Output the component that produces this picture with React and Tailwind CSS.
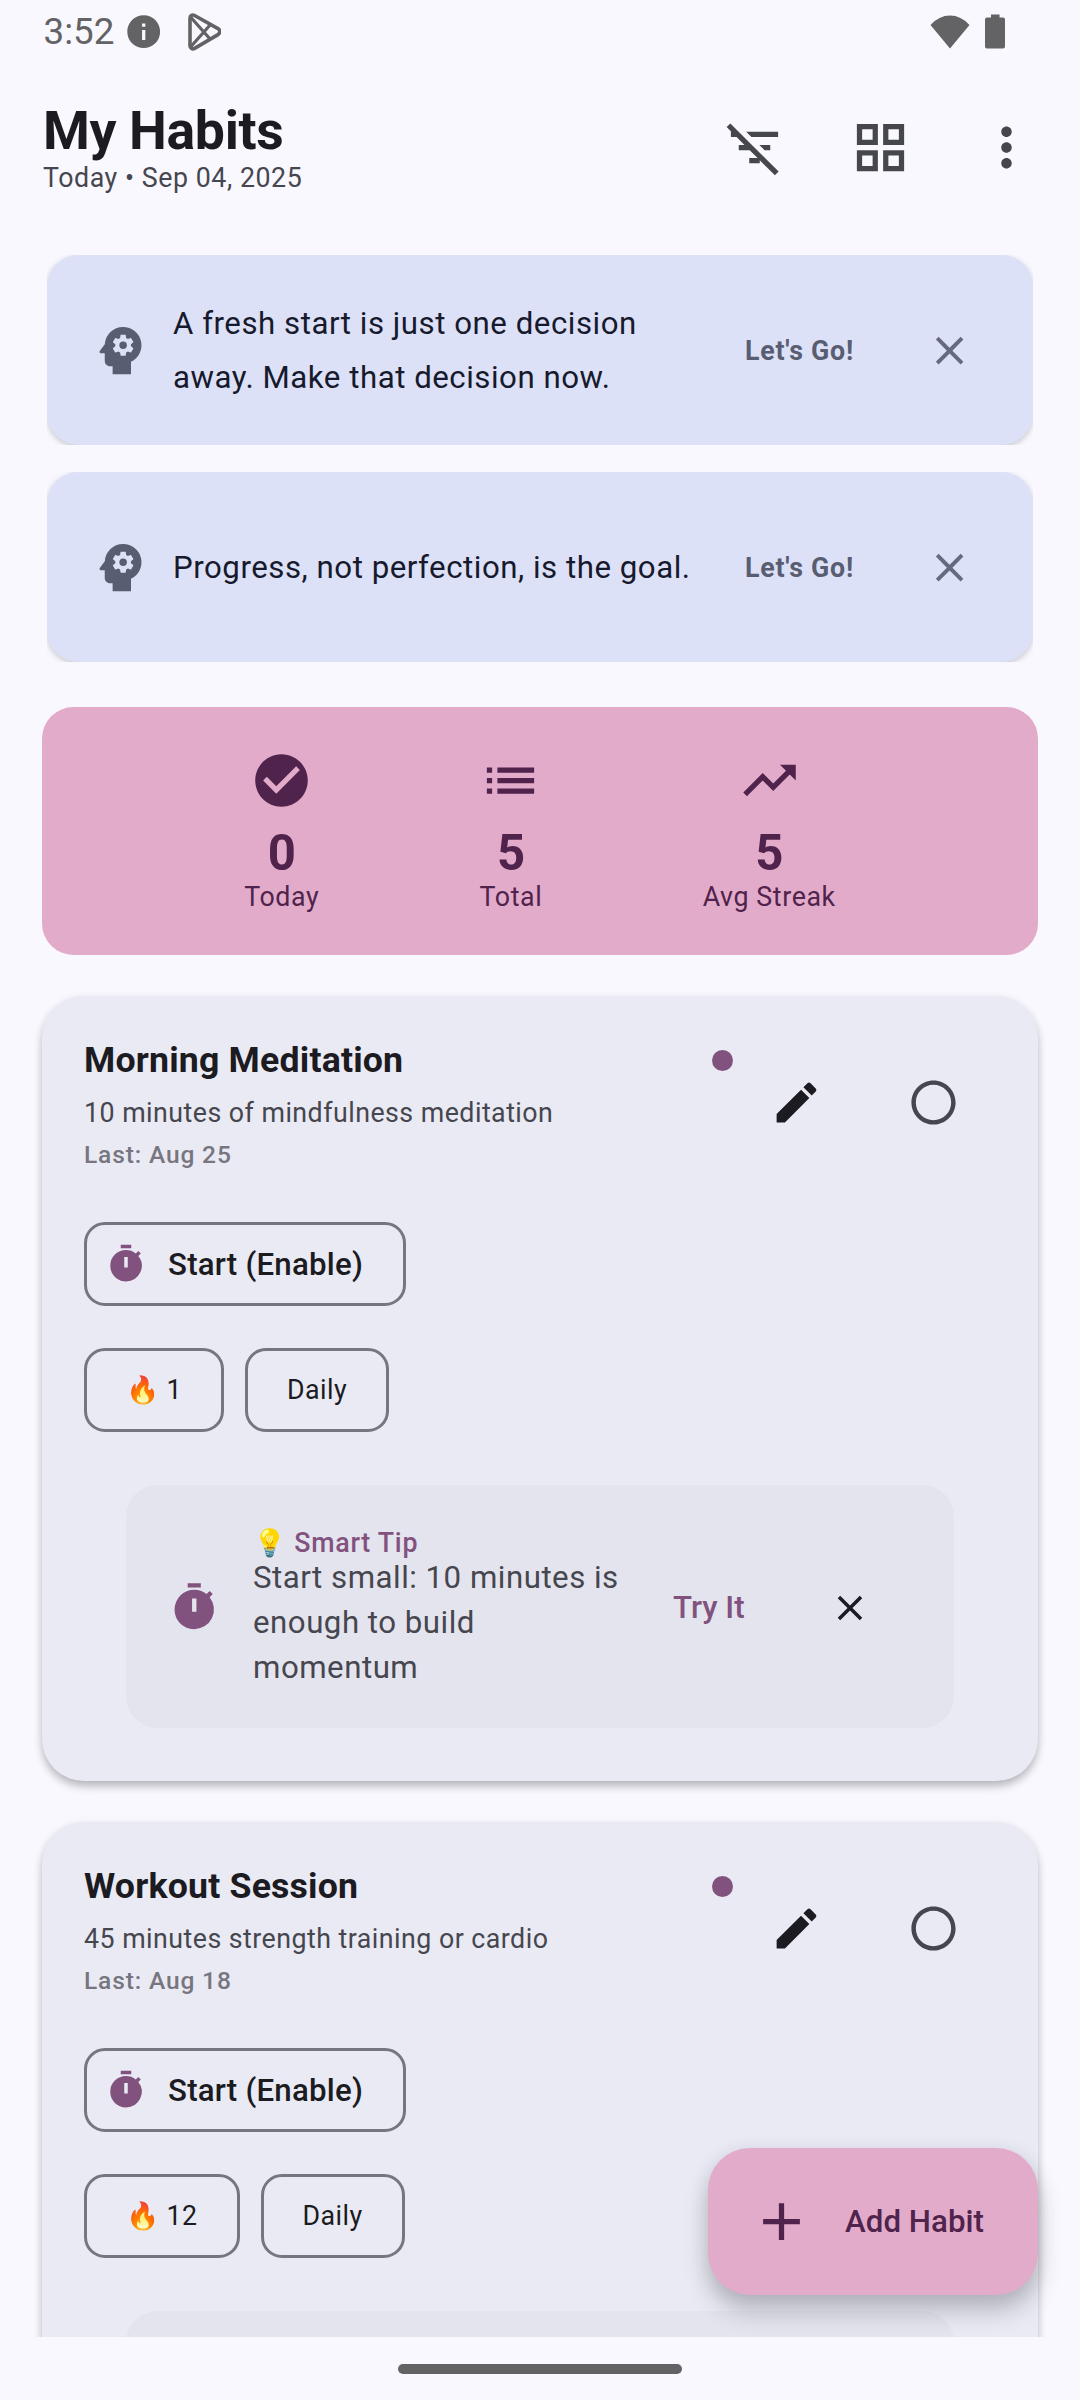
import React from "react";
import {
  MdInfo,
  MdFilterListOff,
  MdGridView,
  MdMoreVert,
  MdPsychology,
  MdClose,
  MdCheckCircle,
  MdList,
  MdTrendingUp,
  MdEdit,
  MdRadioButtonUnchecked,
  MdTimer,
  MdAdd,
} from "react-icons/md";

function PlayIcon() {
  return (
    <svg width="34" height="38" viewBox="0 0 34 38" fill="none" stroke="#636365" strokeWidth="3.6" strokeLinejoin="round">
      <path d="M3 5.2c0-2.6 2.4-4 4.600-2.700L31 15.600c2.400 1.400 2.400 4.600 0 6L7.600 35.400C5.400 36.700 3 35.300 3 32.700z" />
      <path d="M4 4.500L23.500 26.500M4 33.500L23.500 11.500" strokeWidth="3.2" />
    </svg>
  );
}

function StatusBar() {
  return (
    <div className="flex h-[63px] shrink-0 items-center pl-[43.500px] pr-[75px] text-[#636365]">
      <span className="text-[36.750px] leading-[63px]">3:52</span>
      <MdInfo className="ml-[10px] size-[39.400px]" />
      <span className="ml-[23px]">
        <PlayIcon />
      </span>
      <svg className="ml-auto" width="40" height="34" viewBox="0 0 40 34" fill="currentColor">
        <path d="M20 33.500L0.500 10Q9 0.500 20 0.500T39.500 10z" />
      </svg>
      <svg className="ml-[15px]" width="20" height="35" viewBox="0 0 20 35" fill="currentColor">
        <path d="M6 0.500h8.500V3.500H18a2 2 0 0 1 2 2V32.500a2 2 0 0 1-2 2H2a2 2 0 0 1-2-2V5.500a2 2 0 0 1 2-2h4z" />
      </svg>
    </div>
  );
}

function Header() {
  return (
    <header className="flex h-[168px] shrink-0 pl-[42px] pr-[42px]">
      <div className="flex flex-1 flex-col pl-px pt-[35px]">
        <h1 className="h-[62px] text-[53.550px] font-bold leading-[65px] tracking-[-0.350px] text-[#1b1b21]">My Habits</h1>
        <p className="text-[26.775px] leading-[36px] tracking-[0.550px] text-[#46464f]">Today • Sep 04, 2025</p>
      </div>
      <div className="flex items-center gap-[63px] text-[63px] text-[#46464f]">
        <MdFilterListOff />
        <MdGridView />
        <MdMoreVert />
      </div>
    </header>
  );
}

function Banner({ children }) {
  return (
    <div className="h-[190px] overflow-hidden">
      <div className="flex h-full items-center rounded-[31.500px] bg-[#dde1f8] px-[42px] shadow-[0_2px_6px_rgba(0,0,0,0.200)]">
        <MdPsychology className="size-[63px] text-[#595d72]" />
        <p className="ml-[21px] flex-1 whitespace-nowrap pt-px text-[31.240px] leading-[53.500px] tracking-[0.520px] text-[#161a2c]">
          {children}
        </p>
        <span className="w-[163px] pt-[2px] text-[26.775px] font-bold leading-[36px] tracking-[0.760px] text-[#595d72]">Let's Go!</span>
        <div className="-mr-px flex w-[84px] justify-center">
          <MdClose className="mt-px size-[47.250px] text-[#666a80]" />
        </div>
      </div>
    </div>
  );
}

function Stat({ icon: Icon, value, label }) {
  return (
    <div className="flex flex-col items-center">
      <Icon className="size-[63px]" />
      <span className="mt-[14px] h-[52.500px] text-[49.100px] font-bold leading-[54.500px]">{value}</span>
      <span className="text-[26.775px] leading-[36px] tracking-[0.600px]">{label}</span>
    </div>
  );
}

function Chip({ children }) {
  return (
    <span className="flex h-[84px] items-center rounded-[21px] border-[3px] border-[#777680] px-[39px] text-[26.775px] leading-[36px] tracking-[0.450px] text-[#1b1b21]">
      {children}
    </span>
  );
}

function SmartTip({ lines }) {
  return (
    <>
      <MdTimer className="mt-px size-[52.500px] text-[#82527f]" />
      <div className="ml-[32.500px] flex-1 whitespace-nowrap pt-px">
        <p className="h-[31px] text-[26.775px] font-medium leading-[39px] tracking-[0.760px] text-[#82527f]">💡 Smart Tip</p>
        <p className="text-[31.240px] leading-[45px] tracking-[0.500px] text-[#46464f]">
          {lines.map((line) => (
            <span key={line} className="block">
              {line}
            </span>
          ))}
        </p>
      </div>
      <span className="w-[114px] pt-[2px] text-[31.240px] font-medium leading-[45px] text-[#82527f]">Try It</span>
      <div className="-mr-px flex w-[126px] justify-center">
        <MdClose className="mt-[2px] size-[42px] text-[#1b1b21]" />
      </div>
    </>
  );
}

function HabitCard({ title, description, last, streak, tip }) {
  return (
    <article className="flex h-[785px] shrink-0 flex-col rounded-[42px] bg-[#eaeaf4] p-[42px] shadow-[0_6px_10px_-1px_rgba(0,0,0,0.240),0_2px_10px_rgba(0,0,0,0.080)]">
      <div className="flex h-[135px]">
        <div className="w-[649px]">
          <div className="flex h-[44px] items-center justify-between">
            <h2 className="text-[35.700px] font-bold leading-[44px] tracking-[0.180px] text-[#1b1b21]">{title}</h2>
            <span className="mt-px size-[21px] rounded-full bg-[#82527f]" />
          </div>
          <p className="mt-[13px] text-[26.775px] leading-[36px] tracking-[0.470px] text-[#46464f]">{description}</p>
          <p className="mt-[6px] text-[24.540px] font-medium leading-[36px] tracking-[0.850px] text-[#777680]">{last}</p>
        </div>
        <div className="mt-px flex h-[126px] gap-[11.500px]">
          <div className="flex w-[126px] items-center justify-center">
            <MdEdit className="size-[53px] text-[#1b1b21]" />
          </div>
          <div className="-mr-px flex w-[126px] items-center justify-center">
            <MdRadioButtonUnchecked className="size-[53px] text-[#46464f]" />
          </div>
        </div>
      </div>
      <div className="mt-[49px] flex h-[84px] w-[322px] items-center rounded-[21px] border-[3px] border-[#777680] pl-[18px]">
        <MdTimer className="size-[42px] text-[#82527f]" />
        <span className="ml-[21px] text-[31.240px] font-medium leading-[45px] tracking-[0.220px] text-[#1b1b21]">Start (Enable)</span>
      </div>
      <div className="mt-[42px] flex gap-[21px]">
        <Chip>🔥 {streak}</Chip>
        <Chip>Daily</Chip>
      </div>
      <div className="mx-[42px] mt-[53px] flex h-[243px] shrink-0 items-center rounded-[31.500px] bg-[#e4e4ee] px-[42px]">
        {tip && <SmartTip lines={tip} />}
      </div>
    </article>
  );
}

export default function App() {
  return (
    <div className="relative flex h-[2400px] w-[1080px] flex-col overflow-hidden bg-[#f9f8ff] font-['Roboto',sans-serif]">
      <StatusBar />
      <Header />
      <main className="flex h-[2106px] shrink-0 flex-col overflow-hidden px-[42px] pt-[24px]">
        <div className="flex flex-col gap-[27px] px-[5px]">
          <Banner>
            A fresh start is just one decision
            <br />
            away. Make that decision now.
          </Banner>
          <Banner>Progress, not perfection, is the goal.</Banner>
        </div>
        <section className="mt-[45px] flex h-[248px] shrink-0 justify-evenly rounded-[31.500px] bg-[#e3abca] px-[42px] pt-[42px] text-[#4f234c]">
          <Stat icon={MdCheckCircle} value="0" label="Today" />
          <Stat icon={MdList} value="5" label="Total" />
          <Stat icon={MdTrendingUp} value="5" label="Avg Streak" />
        </section>
        <div className="mt-[41px] flex flex-col gap-[41px]">
          <HabitCard
            title="Morning Meditation"
            description="10 minutes of mindfulness meditation"
            last="Last: Aug 25"
            streak="1"
            tip={["Start small: 10 minutes is", "enough to build", "momentum"]}
          />
          <HabitCard
            title="Workout Session"
            description="45 minutes strength training or cardio"
            last="Last: Aug 18"
            streak="12"
          />
        </div>
      </main>
      <div className="flex h-[63px] shrink-0 items-start justify-center pt-[27px]">
        <div className="h-[10px] w-[284px] rounded-full bg-[#636365]" />
      </div>
      <button className="absolute bottom-[105px] right-[42px] flex h-[147px] w-[330px] items-center rounded-[42px] bg-[#e3abca] pl-[42px] text-[#4f234c] shadow-[0_16px_24px_rgba(0,0,0,0.210),0_2px_20px_rgba(0,0,0,0.070)]">
        <MdAdd className="size-[63px]" />
        <span className="ml-[32px] text-[31.240px] font-medium leading-[45px] tracking-[0.050px]">Add Habit</span>
      </button>
    </div>
  );
}
